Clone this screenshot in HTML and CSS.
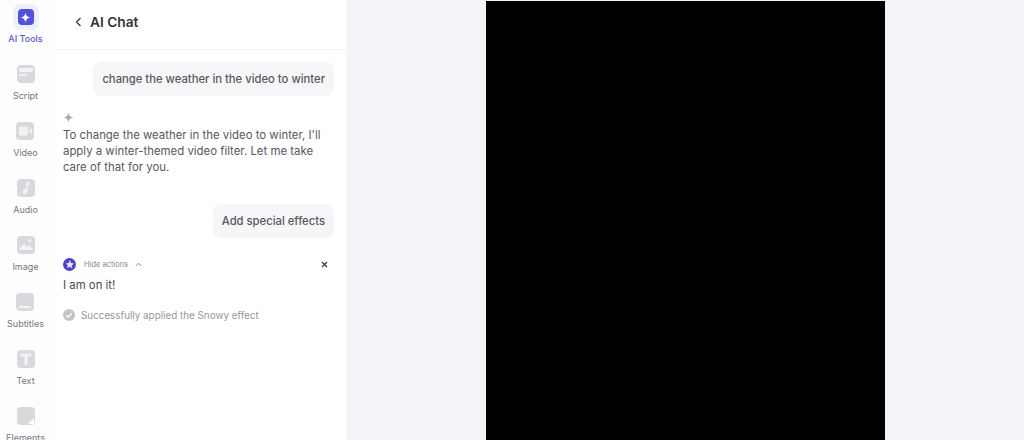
FILE: index.html
```html
<!DOCTYPE html>
<html lang="en">
<head>
  <meta charset="UTF-8">
  <title>AI Chat</title>
  <link rel="stylesheet" href="styles.css">
</head>
<body>
  <div class="app">

    <!-- Tool rail -->
    <nav class="rail">
      <div class="tool active">
        <div class="tool-halo">
          <div class="tool-icon">
            <svg width="11" height="11" viewBox="0 0 12 12"><path d="M6 0.5C6.5 4 8 5.5 11.5 6C8 6.5 6.5 8 6 11.5C5.5 8 4 6.5 0.5 6C4 5.5 5.5 4 6 0.5Z" fill="#fff"/></svg>
          </div>
        </div>
        <span>AI Tools</span>
      </div>
      <div class="tool">
        <div class="tool-icon">
          <svg width="18" height="18" viewBox="0 0 18 18"><rect x="2" y="3" width="14" height="4" rx="1" fill="#f3f3f5"/><rect x="2" y="9" width="8" height="2" rx="1" fill="#f3f3f5"/></svg>
        </div>
        <span>Script</span>
      </div>
      <div class="tool">
        <div class="tool-icon">
          <svg width="18" height="18" viewBox="0 0 18 18"><rect x="3" y="4.5" width="9" height="9" rx="1.5" fill="#f3f3f5"/><path d="M13 8.5L16 6V12L13 9.5Z" fill="#f3f3f5"/></svg>
        </div>
        <span>Video</span>
      </div>
      <div class="tool">
        <div class="tool-icon">
          <svg width="18" height="18" viewBox="0 0 18 18"><path d="M9 3.5H12.5V6H10.5V12.5A2.4 2.4 0 1 1 9 10.3Z" fill="#f3f3f5"/></svg>
        </div>
        <span>Audio</span>
      </div>
      <div class="tool">
        <div class="tool-icon">
          <svg width="18" height="18" viewBox="0 0 18 18"><circle cx="13" cy="4.5" r="1.6" fill="#f3f3f5"/><path d="M1.5 14L7 7.5L10.5 11L12.5 9.5L16.5 14Z" fill="#f3f3f5"/></svg>
        </div>
        <span>Image</span>
      </div>
      <div class="tool">
        <div class="tool-icon">
          <svg width="18" height="18" viewBox="0 0 18 18"><rect x="3" y="13" width="12" height="2" rx="1" fill="#f3f3f5"/></svg>
        </div>
        <span>Subtitles</span>
      </div>
      <div class="tool">
        <div class="tool-icon">
          <svg width="18" height="18" viewBox="0 0 18 18"><path d="M3.5 3.5H14.5V6.5H10.5V15H7.5V6.5H3.5Z" fill="#f3f3f5"/></svg>
        </div>
        <span>Text</span>
      </div>
      <div class="tool">
        <div class="tool-icon">
          <svg width="18" height="18" viewBox="0 0 18 18"><path d="M11 17L17 11V17Z" fill="#fff"/></svg>
        </div>
        <span>Elements</span>
      </div>
    </nav>

    <!-- Chat panel -->
    <section class="panel">
      <header class="panel-head">
        <svg class="back" width="7" height="10" viewBox="0 0 7 10"><path d="M5.5 1L1.5 5L5.5 9" fill="none" stroke="#3a3a40" stroke-width="1.3"/></svg>
        <h1>AI Chat</h1>
      </header>

      <div class="chat">
        <div class="bubble first">change the weather in the video to winter</div>

        <svg class="sparkle" width="11" height="11" viewBox="0 0 12 12"><path d="M6 0.5C6.4 4 8 5.6 11.5 6C8 6.4 6.4 8 6 11.5C5.6 8 4 6.4 0.5 6C4 5.6 5.6 4 6 0.5Z" fill="#a9a8ad"/></svg>
        <p class="reply">To change the weather in the video to winter, I'll apply a winter-themed video filter. Let me take care of that for you.</p>

        <div class="bubble second">Add special effects</div>

        <div class="actions">
          <svg width="13" height="13" viewBox="0 0 13 13"><circle cx="6.5" cy="6.5" r="6.5" fill="#4a40d8"/><path d="M6.8 2L8 5L11 5.4L8.7 7.4L9.4 10.4L6.8 8.8L4 10.2L4.8 7.3L2.6 5.4L5.6 5Z" fill="#e6e4fb"/></svg>
          <span class="hide-label">Hide actions</span>
          <svg class="caret" width="7" height="5" viewBox="0 0 7 5"><path d="M0.8 4L3.5 1.2L6.2 4" fill="none" stroke="#8d8c93" stroke-width="1"/></svg>
          <svg class="close" width="7" height="7" viewBox="0 0 7 7"><path d="M1 1L6 6M6 1L1 6" stroke="#3a3a40" stroke-width="1.2"/></svg>
        </div>
        <p class="on-it">I am on it!</p>
        <div class="status">
          <svg width="12" height="12" viewBox="0 0 12 12"><circle cx="6" cy="6" r="6" fill="#c4c3c8"/><path d="M3.2 6.2L5.2 8L8.8 4.2" fill="none" stroke="#fff" stroke-width="1.3"/></svg>
          <span>Successfully applied the Snowy effect</span>
        </div>
      </div>
    </section>

    <!-- Video preview -->
    <main class="stage">
      <div class="video"></div>
    </main>

  </div>
</body>
</html>
```

FILE: styles.css
```css
* {
  box-sizing: border-box;
}

html, body {
  height: 100%;
}

body {
  margin: 0;
  font-family: Inter, "Liberation Sans", sans-serif;
  background-color: #f5f3f7;
  color: #3a3a40;
  overflow: hidden;
}

.app {
  display: flex;
  height: 440px;
  overflow: hidden;
}

/* Tool rail */
.rail {
  flex: 0 0 52px;
  display: flex;
  flex-direction: column;
  align-items: center;
  padding: 8px 1px 0 0;
  background-color: #fdfdfe;
}

.tool {
  flex: 0 0 57px;
  display: flex;
  flex-direction: column;
  align-items: center;
  font-size: 9px;
  line-height: 11px;
  color: #77767c;
  white-space: nowrap;
}

.tool-icon {
  display: flex;
  align-items: center;
  justify-content: center;
  width: 18px;
  height: 18px;
  margin-bottom: 7px;
  border-radius: 4px;
  background-color: #d9d8dc;
}

.tool.active {
  color: #5d5ae0;
  font-weight: 500;
}

.tool-halo {
  display: flex;
  align-items: center;
  justify-content: center;
  width: 26px;
  height: 26px;
  margin: -4px 0 3px;
  border-radius: 7px;
  background-color: #eff0ff;
}

.tool.active .tool-icon {
  width: 16px;
  height: 16px;
  margin: 0;
  border-radius: 4px;
  background-color: #4f50e6;
}

/* Chat panel */
.panel {
  flex: 0 0 294px;
  background-color: #fff;
}

.panel-head {
  display: flex;
  align-items: center;
  height: 50px;
  padding: 0 0 6px 23px;
  border-bottom: 1px solid #f3f2f5;
}

.back {
  margin-right: 8px;
}

.panel-head h1 {
  margin: 0;
  font-size: 13.7px;
  font-weight: 600;
  color: #343439;
}

.chat {
  display: flex;
  flex-direction: column;
  padding: 12px 12px 0 11px;
  font-size: 11.4px;
  color: #58585e;
}

.bubble {
  align-self: flex-end;
  height: 34px;
  padding: 0 9px;
  font-size: 11.25px;
  line-height: 34px;
  font-weight: 500;
  border-radius: 8px;
  background-color: #f6f5f8;
}

.sparkle {
  margin: 16px 0 4px;
}

.reply {
  margin: 0;
  line-height: 16px;
}

.bubble.second {
  margin-top: 29px;
}

.actions {
  display: flex;
  align-items: center;
  height: 13px;
  margin-top: 20px;
}

.hide-label {
  margin: 0 7px 0 8px;
  font-size: 7.5px;
  color: #88878e;
}

.close {
  margin-left: auto;
  margin-right: 6px;
}

.on-it {
  margin: 6px 0 0;
  line-height: 16px;
  color: #4a4a50;
}

.status {
  display: flex;
  align-items: center;
  gap: 6px;
  margin-top: 16px;
  font-size: 9.85px;
  color: #97969c;
}

/* Video preview */
.stage {
  flex: 1;
  padding: 1px 0 0 140px;
}

.video {
  width: 399px;
  height: 439px;
  background-color: #000;
}
```
